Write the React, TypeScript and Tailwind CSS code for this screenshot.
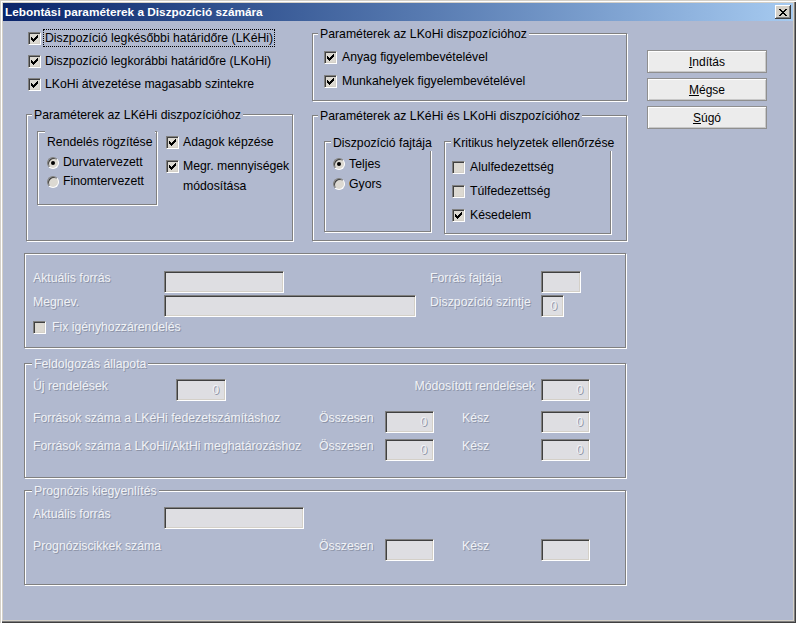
import React from 'react';

const BG = 'bg-[#b1b9cf]';
const DIS = 'text-[#f0f2f6] [text-shadow:1px_1px_0_#8d94a8]';
const SUNKEN =
  'border border-t-[#808080] border-l-[#808080] border-b-white border-r-white shadow-[inset_1px_1px_0_#404040,inset_-1px_-1px_0_#d4d0c8]';

const CheckMark = () => (
  <svg width="7" height="7" viewBox="0 0 7 7" shapeRendering="crispEdges">
    <path d="M0 2h1v3H0zM1 3h1v3H1zM2 4h1v3H2zM3 3h1v3H3zM4 2h1v3H4zM5 1h1v3H5zM6 0h1v3H6z" fill="#000" />
  </svg>
);

const CloseGlyph = () => (
  <svg width="8" height="7" viewBox="0 0 8 7" shapeRendering="crispEdges">
    <path d="M0 0h2v1H0zM6 0h2v1H6zM1 1h2v1H1zM5 1h2v1H5zM2 2h4v1H2zM3 3h2v1H3zM2 4h4v1H2zM1 5h2v1H1zM5 5h2v1H5zM0 6h2v1H0zM6 6h2v1H6z" fill="#000" />
  </svg>
);

const CheckBox: React.FC<{ checked?: boolean }> = ({ checked }) => (
  <span className={`w-[13px] h-[13px] shrink-0 flex items-center justify-center bg-[#dcd9d2] ${SUNKEN}`}>
    {checked && <CheckMark />}
  </span>
);

const Radio: React.FC<{ checked?: boolean }> = ({ checked }) => (
  <span className="w-[12px] h-[12px] shrink-0 rounded-full flex items-center justify-center bg-[#dcd9d2] border border-t-[#808080] border-l-[#808080] border-b-white border-r-white shadow-[inset_1px_1px_0_#404040]">
    {checked && <span className="w-[4px] h-[4px] rounded-full bg-black" />}
  </span>
);

const Group: React.FC<{ title?: string; className?: string; legendClass?: string; children?: React.ReactNode }> = ({
  title,
  className = '',
  legendClass = '',
  children,
}) => (
  <div className={`border border-[#808080] shadow-[inset_1px_1px_0_#fff,1px_1px_0_#fff] ${className}`}>
    {title && <div className={`w-fit whitespace-nowrap px-[2px] leading-[16px] ${BG} ${legendClass}`}>{title}</div>}
    {children}
  </div>
);

const Field: React.FC<{ className?: string; value?: string }> = ({ className = '', value }) => (
  <div className={`h-[22px] shrink-0 flex items-center justify-end pr-[6px] bg-[#dedee2] ${SUNKEN} ${className}`}>
    {value && <span className={DIS}>{value}</span>}
  </div>
);

const Button: React.FC<{ u: string; rest: string }> = ({ u, rest }) => (
  <div className="h-[23px] flex items-center justify-center text-[12px] bg-[#ececec] border border-[#8f8f8f] shadow-[inset_1px_1px_0_#fff,inset_-1px_-1px_0_#c8c8c8]">
    <span>
      <span className="underline">{u}</span>
      {rest}
    </span>
  </div>
);

export default function App() {
  return (
    <div className="w-[796px] h-[623px] flex flex-col p-[3px] bg-[#d4d0c8] shadow-[inset_1px_1px_0_#d4d0c8,inset_2px_2px_0_#fff,inset_-1px_-1px_0_#404040,inset_-2px_-2px_0_#808080] font-['Liberation_Sans',Arial,sans-serif] text-[12.25px] text-black select-none">
      {/* title bar */}
      <div className="h-[18px] shrink-0 flex items-center justify-between px-[2px] bg-linear-to-r from-[#0a246a] to-[#a6caf0]">
        <span className="text-white font-bold text-[11.8px] leading-[16px]">Lebontási paraméterek a Diszpozíció számára</span>
        <div className="w-[16px] h-[14px] flex items-center justify-center bg-[#d4d0c8] shadow-[inset_-1px_-1px_0_#404040,inset_1px_1px_0_#fff,inset_-2px_-2px_0_#808080]">
          <CloseGlyph />
        </div>
      </div>

      {/* body */}
      <div className={`flex-1 ${BG} pl-[21px]`}>
        <div className="flex pl-[2px] items-start">
          {/* left column */}
          <div className="w-[267px] flex flex-col">
            <div className="flex flex-col pt-[5px]">
              <div className="h-[24px] flex items-center pl-[2px]">
                <CheckBox checked />
                <span className="ml-[2px] border border-dotted border-black px-[1px] leading-[16px]">
                  Diszpozíció legkésőbbi határidőre (LKéHi)
                </span>
              </div>
              <div className="h-[23px] flex items-center pl-[2px]">
                <CheckBox checked />
                <span className="ml-[4px]">Diszpozíció legkorábbi határidőre (LKoHi)</span>
              </div>
              <div className="h-[23px] flex items-center pl-[2px]">
                <CheckBox checked />
                <span className="ml-[4px]">LKoHi átvezetése magasabb szintekre</span>
              </div>
            </div>
            <Group className="mt-[18px] h-[127px]" title="Paraméterek az LKéHi diszpozícióhoz" legendClass="ml-[5px] -mt-[8px]">
              <div className="flex items-start">
                <Group className="ml-[10px] mt-[8px] w-[120px] h-[74px]" title="Rendelés rögzítése" legendClass="ml-[7px] -mt-[1px] pt-[3px]">
                  <div className="mt-[3px] pl-[9px] flex flex-col">
                    <div className="h-[19px] flex items-center">
                      <Radio checked />
                      <span className="ml-[4px]">Durvatervezett</span>
                    </div>
                    <div className="h-[19px] flex items-center">
                      <Radio />
                      <span className="ml-[4px]">Finomtervezett</span>
                    </div>
                  </div>
                </Group>
                <div className="ml-[9px] flex flex-col">
                  <div className="mt-[8px] h-[22px] flex items-center">
                    <CheckBox checked />
                    <span className="ml-[4px]">Adagok képzése</span>
                  </div>
                  <div className="mt-[3px] flex items-start leading-[20px]">
                    <span className="mt-[4px]">
                      <CheckBox checked />
                    </span>
                    <span className="ml-[4px] whitespace-nowrap">
                      Megr. mennyiségek
                      <br />
                      módosítása
                    </span>
                  </div>
                </div>
              </div>
            </Group>
          </div>

          {/* right column */}
          <div className="ml-[19px] w-[315px] flex flex-col">
            <Group className="mt-[12px] h-[68px]" title="Paraméterek az LKoHi diszpozícióhoz" legendClass="ml-[5px] -mt-[8px]">
              <div className="mt-[3px] pl-[11px] flex flex-col">
                <div className="h-[24px] flex items-center">
                  <CheckBox checked />
                  <span className="ml-[5px]">Anyag figyelembevételével</span>
                </div>
                <div className="h-[24px] flex items-center">
                  <CheckBox checked />
                  <span className="ml-[5px]">Munkahelyek figyelembevételével</span>
                </div>
              </div>
            </Group>
            <Group className="mt-[14px] h-[126px]" title="Paraméterek az LKéHi és LKoHi diszpozícióhoz" legendClass="ml-[5px] -mt-[8px]">
              <div className="flex items-start">
                <Group className="ml-[11px] mt-[17px] w-[107px] h-[91px]" title="Diszpozíció fajtája" legendClass="ml-[6px] -mt-[7px]">
                  <div className="mt-[3px] pl-[8px] flex flex-col">
                    <div className="h-[20px] flex items-center">
                      <Radio checked />
                      <span className="ml-[4px]">Teljes</span>
                    </div>
                    <div className="h-[20px] flex items-center">
                      <Radio />
                      <span className="ml-[4px]">Gyors</span>
                    </div>
                  </div>
                </Group>
                <Group className="ml-[13px] mt-[17px] w-[167px] h-[93px]" title="Kritikus helyzetek ellenőrzése" legendClass="ml-[6px] -mt-[7px]">
                  <div className="mt-[4px] pl-[7px] flex flex-col">
                    <div className="h-[24px] flex items-center">
                      <CheckBox />
                      <span className="ml-[5px]">Alulfedezettség</span>
                    </div>
                    <div className="h-[24px] flex items-center">
                      <CheckBox />
                      <span className="ml-[5px]">Túlfedezettség</span>
                    </div>
                    <div className="h-[24px] flex items-center">
                      <CheckBox checked />
                      <span className="ml-[5px]">Késedelem</span>
                    </div>
                  </div>
                </Group>
              </div>
            </Group>
          </div>

          {/* buttons */}
          <div className="ml-[20px] mt-[29px] w-[120px] flex flex-col gap-[5px]">
            <Button u="I" rest="ndítás" />
            <Button u="M" rest="égse" />
            <Button u="S" rest="úgó" />
          </div>
        </div>

        {/* current source */}
        <Group className="mt-[12px] w-[602px] h-[95px]">
          <div className="mt-[17px] pl-[8px] flex items-start">
            <span className={`w-[131px] leading-[14px] ${DIS}`}>Aktuális forrás</span>
            <Field className="w-[120px]" />
            <span className={`ml-[146px] w-[111px] leading-[14px] ${DIS}`}>Forrás fajtája</span>
            <Field className="w-[40px]" />
          </div>
          <div className="mt-[2px] pl-[8px] flex items-start">
            <span className={`w-[131px] leading-[14px] ${DIS}`}>Megnev.</span>
            <Field className="w-[252px]" />
            <span className={`ml-[14px] w-[111px] leading-[14px] ${DIS}`}>Diszpozíció szintje</span>
            <Field className="w-[23px] pr-[5px]" value="0" />
          </div>
          <div className="mt-[3px] h-[14px] pl-[8px] flex items-center">
            <CheckBox />
            <span className={`ml-[6px] ${DIS}`}>Fix igényhozzárendelés</span>
          </div>
        </Group>

        {/* processing state */}
        <Group className={`mt-[15px] w-[602px] h-[115px] ${DIS}`} title="Feldolgozás állapota" legendClass="ml-[7px] -mt-[8px]">
          <div className="mt-[7px] pl-[8px] flex items-start">
            <span className="w-[143px] leading-[14px]">Új rendelések</span>
            <Field className="w-[50px]" value="0" />
            <span className="w-[315px] pr-[6px] text-right leading-[14px]">Módosított rendelések</span>
            <Field className="w-[49px]" value="0" />
          </div>
          <div className="mt-[10px] pl-[8px] flex items-start">
            <span className="w-[286px] leading-[14px]">Források száma a LKéHi fedezetszámításhoz</span>
            <span className="w-[66px] leading-[14px]">Összesen</span>
            <Field className="w-[49px]" value="0" />
            <span className="w-[107px] pl-[28px] leading-[14px]">Kész</span>
            <Field className="w-[49px]" value="0" />
          </div>
          <div className="mt-[6px] pl-[8px] flex items-start">
            <span className="w-[286px] leading-[14px]">Források száma a LKoHi/AktHi meghatározáshoz</span>
            <span className="w-[66px] leading-[14px]">Összesen</span>
            <Field className="w-[49px]" value="0" />
            <span className="w-[107px] pl-[28px] leading-[14px]">Kész</span>
            <Field className="w-[49px]" value="0" />
          </div>
        </Group>

        {/* forecast */}
        <Group className={`mt-[12px] w-[602px] h-[95px] ${DIS}`} title="Prognózis kiegyenlítés" legendClass="ml-[7px] -mt-[8px]">
          <div className="mt-[8px] pl-[8px] flex items-start">
            <span className="w-[131px] leading-[14px]">Aktuális forrás</span>
            <Field className="w-[140px]" />
          </div>
          <div className="mt-[10px] pl-[8px] flex items-start">
            <span className="w-[286px] leading-[14px]">Prognóziscikkek száma</span>
            <span className="w-[66px] leading-[14px]">Összesen</span>
            <Field className="w-[49px]" />
            <span className="w-[107px] pl-[28px] leading-[14px]">Kész</span>
            <Field className="w-[49px]" />
          </div>
        </Group>
      </div>
    </div>
  );
}
